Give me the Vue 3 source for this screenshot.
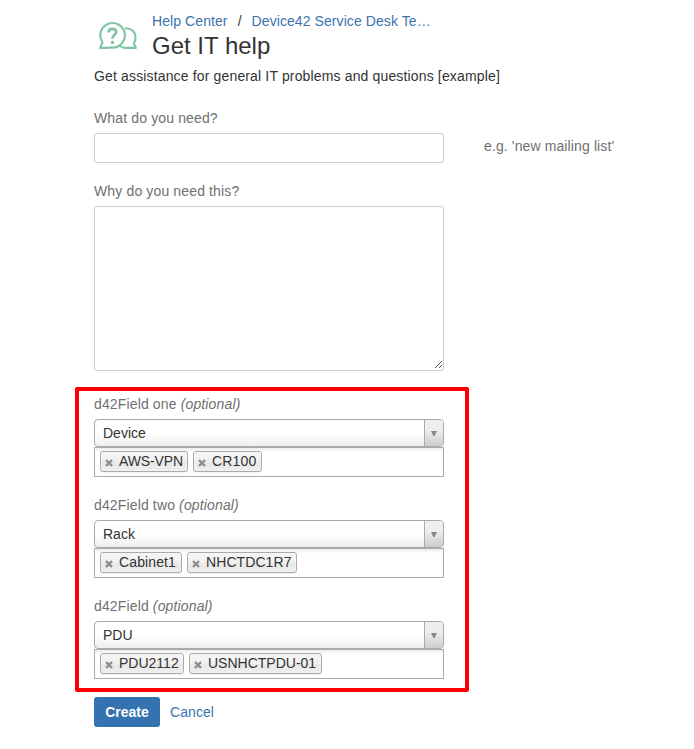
<script setup>
import { ref } from 'vue'

const summary = ref('')
const reason = ref('')
const fields = [
  {
    id: 'one',
    name: 'd42Field one',
    type: 'Device',
    values: [
      { text: 'AWS-VPN', width: 88, tracking: -0.12 },
      { text: 'CR100', width: 69, tracking: 0.2 },
    ],
  },
  {
    id: 'two',
    name: 'd42Field two',
    type: 'Rack',
    values: [
      { text: 'Cabinet1', width: 82, tracking: 0.12 },
      { text: 'NHCTDC1R7', width: 110, tracking: 0.08 },
    ],
  },
  {
    id: 'three',
    name: 'd42Field',
    type: 'PDU',
    values: [
      { text: 'PDU2112', width: 84, tracking: 0 },
      { text: 'USNHCTPDU-01', width: 133, tracking: 0 },
    ],
  },
]
</script>

<template>
  <main class="page">
    <header class="head">
      <svg class="logo" width="40" height="30" viewBox="0 0 40 30" fill="none" stroke="#7fc4a5" stroke-width="2.1" stroke-linejoin="round">
        <path d="M2.1 26.9 L4.5 21.3 A12.3 12.3 0 1 1 14.3 26.6 Q12 26.1 10.5 26.9 Z" />
        <path d="M27 7.3 C33 6.6 37.5 10.7 37.5 16.5 C37.5 18.7 37 20.6 35.9 22.3 L37.9 26.9 H27.4 C25.2 26.8 23.3 26.1 22 25" />
        <path d="M10.6 11.4 C10.6 9.2 12.2 7.9 14.4 7.9 C16.7 7.9 18.2 9.1 18.2 11.1 C18.2 13.7 14.4 14 14.4 17.7" stroke-width="2.7" />
        <circle cx="14.4" cy="21.4" r="1.7" fill="#7fc4a5" stroke="none" />
      </svg>
      <div>
        <nav class="crumbs">
          <a>Help Center</a><span class="slash">/</span><a>Device42 Service Desk Te…</a>
        </nav>
        <h1>Get IT help</h1>
      </div>
    </header>
    <p class="intro">Get assistance for general IT problems and questions [example]</p>

    <form @submit.prevent>
      <div class="group">
        <label class="label" for="summary">What do you need?</label>
        <div class="line">
          <input id="summary" v-model="summary" class="box input" type="text" />
          <span class="hint">e.g. 'new mailing list'</span>
        </div>
      </div>
      <div class="group">
        <label class="label" for="reason">Why do you need this?</label>
        <div class="area-wrap">
          <textarea id="reason" v-model="reason" class="box area"></textarea>
          <svg class="grip" width="8" height="8" viewBox="0 0 8 8" stroke="#555" shape-rendering="crispEdges">
            <path d="M0.5 7.5 L7.5 0.5 M4.5 7.5 L7.5 4.5" />
          </svg>
        </div>
      </div>

      <section class="marked">
        <div v-for="field in fields" :key="field.id" class="field">
          <div class="label">{{ field.name }} <em>(optional)</em></div>
          <div class="select">
            <span class="chosen">{{ field.type }}</span>
            <span class="arrow">
              <svg width="6" height="5" viewBox="0 0 6 5"><path d="M0 0 H6 L3.6 5 H2.4 Z" fill="#888" /></svg>
            </span>
          </div>
          <div class="multi">
            <span
              v-for="value in field.values"
              :key="value.text"
              class="chip"
              :style="{ width: value.width + 'px', letterSpacing: value.tracking + 'px' }"
            >
              <svg class="cross" width="8" height="8" viewBox="0 0 8 8" stroke="#8c8c8c" stroke-width="2.4">
                <path d="M1 1 L7 7 M7 1 L1 7" />
              </svg>{{ value.text }}
            </span>
          </div>
        </div>
      </section>

      <div class="actions">
        <button class="create" type="submit">Create</button>
        <a>Cancel</a>
      </div>
    </form>
  </main>
</template>

<style>
body {
  background: #fff;
}
</style>

<style scoped>
.page {
  box-sizing: border-box;
  width: 694px;
  height: 749px;
  padding: 11px 0 0 94px;
  overflow: hidden;
  background: #fff;
  color: #333;
  font: 14px/20px "Liberation Sans", Arial, sans-serif;
}
a {
  color: #3b73af;
  letter-spacing: 0.08px;
}
.head {
  display: flex;
  height: 55px;
}
.logo {
  margin: 10px 14px 0 4px;
}
.crumbs {
  display: flex;
  white-space: nowrap;
}
.slash {
  width: 24px;
  text-align: center;
}
h1 {
  margin: 0;
  font-size: 24px;
  font-weight: 400;
  line-height: 30px;
}
.intro {
  margin: 0 0 22px;
  letter-spacing: 0.15px;
}
.group {
  margin-bottom: 18px;
}
.label {
  display: block;
  margin-bottom: 5px;
  color: #707070;
  letter-spacing: 0.14px;
}
.line {
  display: flex;
  gap: 40px;
}
.box {
  display: block;
  box-sizing: border-box;
  width: 350px;
  margin: 0;
  border: 1px solid #ccc;
  border-radius: 3px;
  background: #fff;
  outline: none;
  font: inherit;
}
.input {
  height: 30px;
}
.area {
  height: 165px;
  resize: none;
}
.hint {
  padding-top: 3px;
  color: #707070;
  letter-spacing: 0.12px;
}
.area-wrap {
  position: relative;
  width: 350px;
}
.grip {
  position: absolute;
  right: 2px;
  bottom: 2px;
}
.marked {
  box-sizing: border-box;
  width: 394px;
  height: 305px;
  margin: -2px 0 0 -19px;
  padding: 3px 0 0 15px;
  border: 4px solid #f00;
  border-radius: 2px;
}
.field {
  width: 350px;
  margin-bottom: 18px;
}
.select {
  display: flex;
  box-sizing: border-box;
  height: 28px;
  border: 1px solid #aaa;
  border-radius: 4px;
  background: linear-gradient(to top, #eee 0%, #fff 50%);
  overflow: hidden;
}
.chosen {
  flex: 1;
  padding-left: 8px;
  line-height: 27px;
}
.arrow {
  display: flex;
  box-sizing: border-box;
  width: 19px;
  padding: 1px 1px 0 0;
  align-items: center;
  justify-content: center;
  border-left: 1px solid #aaa;
  background: linear-gradient(to top, #ccc 0%, #eee 60%);
}
.multi {
  display: flex;
  box-sizing: border-box;
  height: 30px;
  padding: 3px 0 0 5px;
  gap: 5px;
  align-items: flex-start;
  border: 1px solid #aaa;
  background: linear-gradient(to bottom, #eee 1%, #fff 15%);
}
.chip {
  display: flex;
  box-sizing: border-box;
  height: 21px;
  padding-left: 4px;
  border: 1px solid #aaa;
  border-radius: 3px;
  background: linear-gradient(to bottom, #f4f4f4 20%, #f0f0f0 50%, #e8e8e8 52%, #eee 100%);
  box-shadow: 0 0 2px #fff inset, 0 1px 0 rgba(0, 0, 0, 0.05);
  line-height: 19px;
  white-space: nowrap;
}
.cross {
  flex: none;
  margin: 7px 6px 0 0;
}
.actions {
  display: flex;
  gap: 10px;
  margin-top: 5px;
  line-height: 30px;
}
.create {
  box-sizing: border-box;
  width: 66px;
  height: 30px;
  padding: 0;
  border: 0;
  border-radius: 3px;
  background: #3572b0;
  color: #fff;
  font: bold 14px/30px "Liberation Sans", Arial, sans-serif;
}
</style>
